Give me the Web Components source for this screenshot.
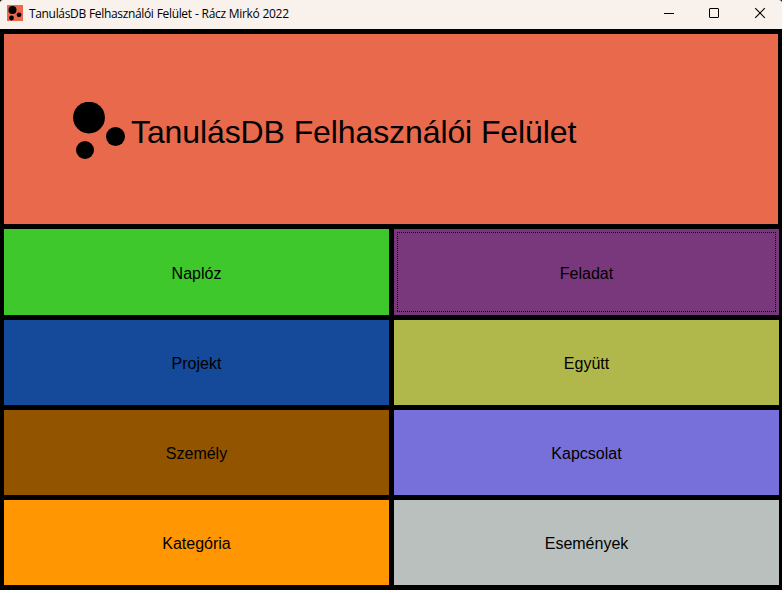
<!DOCTYPE html>
<html lang="hu">
<head>
<meta charset="utf-8">
<title>TanulásDB Felhasználói Felület - Rácz Mirkó 2022</title>
<style>
html,body{margin:0;height:100%;overflow:hidden;background:#000}
</style>
</head>
<body>
<app-window></app-window>
<script>
class BaseElement extends HTMLElement {
  connectedCallback() {
    if (this.shadowRoot) return;
    this.attachShadow({mode: 'open'}).innerHTML = this.render();
  }
}

customElements.define('title-bar', class extends BaseElement {
  render() {
    return `<style>
      :host{display:flex;align-items:flex-start;height:29px;background:#f9f1ec;color:#000;border-radius:3px 3px 0 0;
        font:12px/16px "Open Sans","Noto Sans",sans-serif}
      .icon{margin:5px 0 0 7px;flex:none}
      .caption{margin:6px 0 0 6px;flex:1;white-space:nowrap;letter-spacing:-0.34px;word-spacing:.4px}
      .controls{display:flex}
      .controls svg{display:block}
    </style>
    <svg class="icon" width="16" height="16" viewBox="0 0 16 16">
      <rect width="16" height="16" fill="#e8694b"/>
      <circle cx="5.5" cy="5" r="4"/><circle cx="12" cy="9.8" r="2.4"/><circle cx="4.5" cy="13" r="2.4"/>
    </svg>
    <span class="caption"><slot></slot></span>
    <div class="controls">
      <svg width="46" height="29" fill="none" stroke="#000"><path d="M18 13.5h10"/></svg>
      <svg width="45" height="29" fill="none" stroke="#000"><rect x="17.5" y="8.500" width="9" height="9" rx=".5"/></svg>
      <svg width="45" height="29" fill="none" stroke="#000" stroke-width="1.150"><path d="M18.200 8.200l9.600 9.600M27.800 8.200l-9.600 9.600"/></svg>
    </div>`;
  }
});

customElements.define('app-banner', class extends BaseElement {
  render() {
    return `<style>
      :host{display:flex;align-items:flex-start;box-sizing:border-box;width:774px;height:190px;padding:68px 0 0 69px;background:#e8694b;color:#000}
      svg{display:block;flex:none}
      h1{margin:12px 0 0 6px;font:32px/36px "Liberation Sans",Arial,sans-serif;white-space:nowrap;letter-spacing:-.1px}
    </style>
    <svg width="52" height="58"><circle cx="16" cy="15.600" r="15.900"/><circle cx="42.500" cy="34.500" r="9.500"/><circle cx="12" cy="48" r="9"/></svg>
    <h1><slot></slot></h1>`;
  }
});

customElements.define('menu-tile', class extends BaseElement {
  render() {
    return `<style>
      :host{display:block}
      button{display:flex;align-items:center;justify-content:center;box-sizing:border-box;width:100%;height:100%;
        margin:0;padding:3px;border:0;background:var(--tile);color:#000;font:16px/18px "Liberation Sans",Arial,sans-serif}
      span{display:flex;align-items:center;justify-content:center;width:100%;height:100%;padding-top:3px;box-sizing:border-box}
      :host([focused]) span{
        background:
          repeating-linear-gradient(90deg,#000 0 1px,transparent 1px 2px) top/100% 1px no-repeat,
          repeating-linear-gradient(90deg,#000 0 1px,transparent 1px 2px) bottom/100% 1px no-repeat,
          repeating-linear-gradient(#000 0 1px,transparent 1px 2px) left/1px 100% no-repeat,
          repeating-linear-gradient(#000 0 1px,transparent 1px 2px) right/1px 100% no-repeat}
    </style>
    <button><span><slot></slot></span></button>`;
  }
});

customElements.define('app-window', class extends BaseElement {
  render() {
    const tiles = [
      ['Naplóz', '#3fc82b'], ['Feladat', '#7a387c', 'focused'],
      ['Projekt', '#144a99'], ['Együtt', '#b0b84b'],
      ['Személy', '#935400'], ['Kapcsolat', '#7770da'],
      ['Kategória', '#ff9602'], ['Események', '#b9c0bd']
    ];
    return `<style>
      :host{display:block;width:782px;height:590px;background:#000}
      main{padding:5px 3px 5px 4px}
      nav{display:grid;grid-template-columns:385px 385px;grid-template-rows:86px 85px 85px 85px;gap:5px;margin-top:5px}
    </style>
    <title-bar>TanulásDB Felhasználói Felület - Rácz Mirkó 2022</title-bar>
    <main>
      <app-banner>TanulásDB Felhasználói Felület</app-banner>
      <nav>${tiles.map(([name, color, state]) => `<menu-tile style="--tile:${color}" ${state || ''}>${name}</menu-tile>`).join('')}</nav>
    </main>`;
  }
});
</script>
</body>
</html>
